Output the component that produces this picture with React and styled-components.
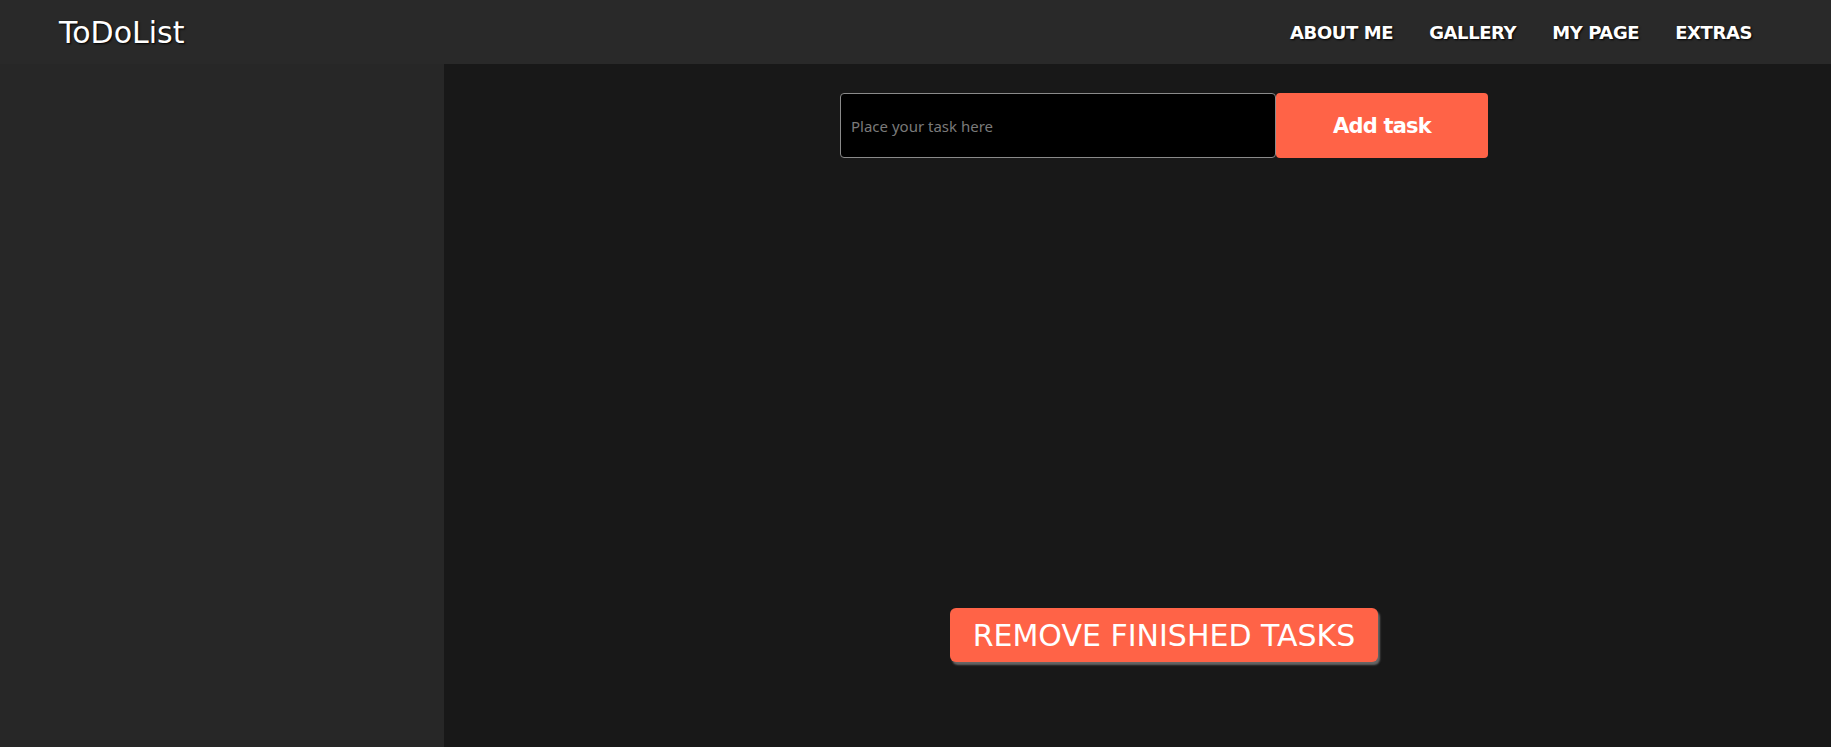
import React, { useState } from 'react';
import styled, { createGlobalStyle } from 'styled-components';

const GlobalStyle = createGlobalStyle`
  html, body {
    margin: 0;
    padding: 0;
    height: 100%;
    background: #181818;
    font-family: "DejaVu Sans", "Noto Sans", sans-serif;
  }
  #root {
    height: 100%;
  }
  * {
    box-sizing: border-box;
  }
`;

const Page = styled.div`
  display: flex;
  flex-direction: column;
  height: 100vh;
`;

const Header = styled.header`
  height: 64px;
  flex-shrink: 0;
  background: #292929;
  display: flex;
  align-items: center;
  justify-content: space-between;
  padding: 0 79px 0 59px;
`;

const Logo = styled.h1`
  margin: 0;
  font-size: 30px;
  font-weight: 400;
  letter-spacing: 0;
  color: #fff;
  text-shadow: 1px 1px 2px #000;
`;

const Nav = styled.nav`
  display: flex;
  gap: 36px;
`;

const NavLink = styled.a`
  color: #fff;
  font-size: 18px;
  font-weight: 700;
  letter-spacing: -0.4px;
  text-decoration: none;
  text-transform: uppercase;
  text-shadow: 1px 1px 2px #000;
  cursor: pointer;
`;

const Body = styled.div`
  flex: 1;
  display: flex;
`;

const Sidebar = styled.aside`
  width: 444px;
  flex-shrink: 0;
  background: #272727;
`;

const Main = styled.main`
  flex: 1;
  background: #181818;
  display: flex;
  flex-direction: column;
  align-items: center;
  padding: 29px 0 0 53px;
`;

const Form = styled.form`
  display: flex;
`;

const TaskInput = styled.input`
  width: 436px;
  height: 65px;
  background: #000;
  border: 1px solid #8a8a8a;
  border-radius: 4px;
  color: #fff;
  font-family: "Noto Sans", sans-serif;
  font-size: 15px;
  padding: 0 10px;
  outline: none;

  &::placeholder {
    color: #7a7a7a;
  }
`;

const AddButton = styled.button`
  width: 212px;
  height: 65px;
  border: none;
  border-radius: 4px;
  background: #ff6347;
  color: #fff;
  font-family: "DejaVu Sans", sans-serif;
  font-size: 21px;
  font-weight: 600;
  letter-spacing: -0.8px;
  cursor: pointer;
`;

const TaskList = styled.ul`
  list-style: none;
  margin: 0;
  padding: 0;
  height: 450px;
`;

const RemoveButton = styled.button`
  height: 54px;
  padding: 0 23px;
  border: none;
  border-radius: 6px;
  background: #ff6347;
  color: #fff;
  font-family: "DejaVu Sans", sans-serif;
  font-size: 30px;
  font-weight: 400;
  letter-spacing: 0;
  text-transform: uppercase;
  box-shadow: 2px 3px 2px #666;
  cursor: pointer;
`;

const links = ['About me', 'Gallery', 'My page', 'Extras'];

const App = () => {
  const [tasks] = useState([]);

  return (
    <Page>
      <GlobalStyle />
      <Header>
        <Logo>ToDoList</Logo>
        <Nav>
          {links.map((l) => (
            <NavLink key={l}>{l}</NavLink>
          ))}
        </Nav>
      </Header>
      <Body>
        <Sidebar />
        <Main>
          <Form onSubmit={(e) => e.preventDefault()}>
            <TaskInput placeholder="Place your task here" />
            <AddButton type="submit">Add task</AddButton>
          </Form>
          <TaskList>
            {tasks.map((t) => (
              <li key={t}>{t}</li>
            ))}
          </TaskList>
          <RemoveButton>Remove finished tasks</RemoveButton>
        </Main>
      </Body>
    </Page>
  );
};

export default App;
